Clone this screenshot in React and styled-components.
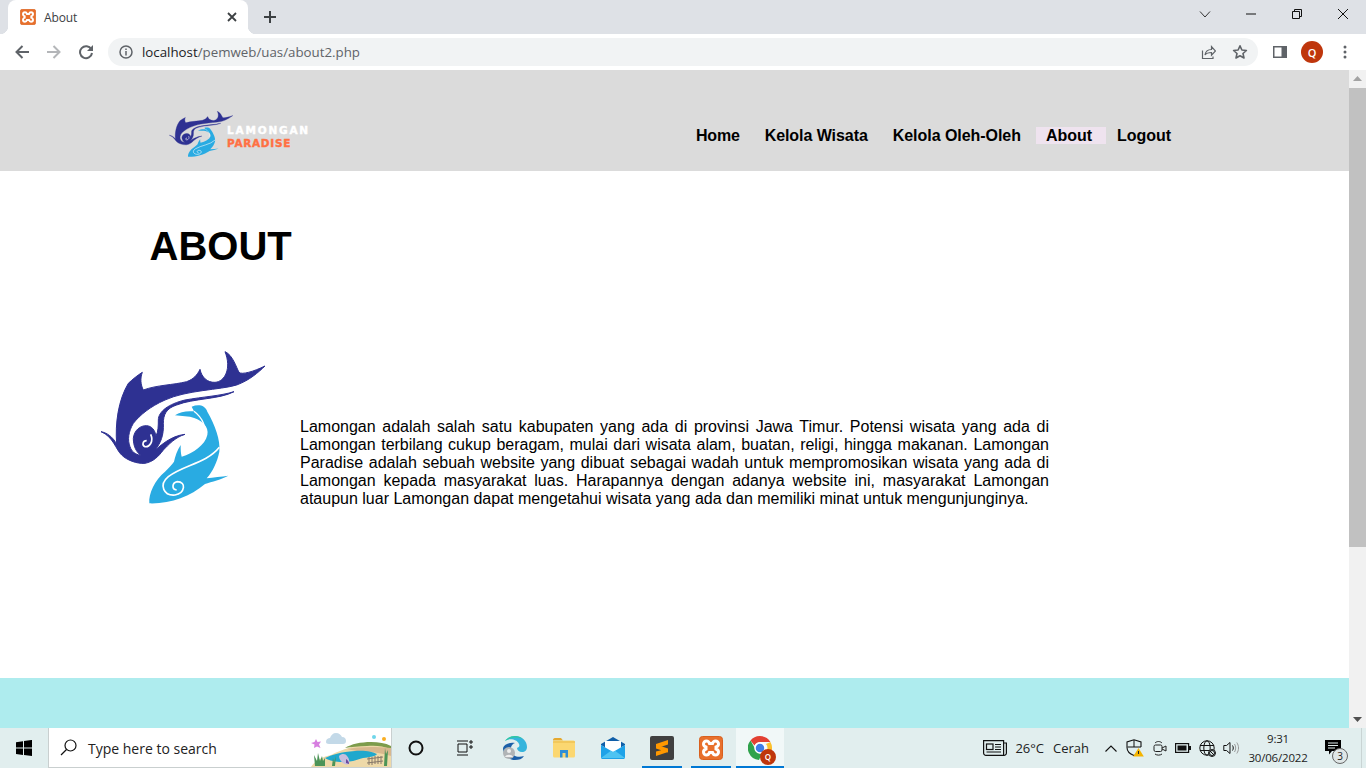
import React from "react";
import styled, { createGlobalStyle } from "styled-components";

const Global = createGlobalStyle`
  html, body { margin: 0; padding: 0; height: 768px; overflow: hidden; background: #fff; }
  #root { height: 768px; }
  * { box-sizing: border-box; }
`;

const Screen = styled.div`
  width: 1366px; height: 768px; display: flex; flex-direction: column; overflow: hidden;
`;

/* ---------- browser chrome ---------- */
const TabStrip = styled.div`
  height: 34px; background: #dee1e6; display: flex; align-items: stretch; padding-left: 8px; flex: none;
`;
const Tab = styled.div`
  width: 240px; background: #fff; border-radius: 8px 8px 0 0; display: flex; align-items: center;
  padding: 0 11px 0 12px; position: relative;
  &::before, &::after { content: ""; position: absolute; bottom: 0; width: 8px; height: 8px; background: #fff; }
  &::before { left: -8px; -webkit-mask: radial-gradient(circle at 0 0, transparent 8px, #000 8.5px); mask: radial-gradient(circle at 0 0, transparent 8px, #000 8.5px); }
  &::after { right: -8px; -webkit-mask: radial-gradient(circle at 100% 0, transparent 8px, #000 8.5px); mask: radial-gradient(circle at 100% 0, transparent 8px, #000 8.5px); }
`;
const TabTitle = styled.span`
  font: 12px "Open Sans", sans-serif; color: #3c4043; margin-left: 8px; flex: 1; letter-spacing: -.1px;
`;
const NewTab = styled.div`
  width: 28px; margin-left: 8px; display: flex; align-items: center; justify-content: center;
`;
const StripSpace = styled.div` flex: 1; `;
const WinBtn = styled.div`
  width: 46px; display: flex; align-items: center; justify-content: center; padding-bottom: 6px;
`;
const Toolbar = styled.div`
  height: 36px; background: #fff; display: flex; align-items: center; flex: none; padding-left: 6px;
`;
const NavBtn = styled.div`
  width: 32px; height: 32px; display: flex; align-items: center; justify-content: center;
  margin-left: ${p => p.$gap ?? 0}px;
`;
const Omnibox = styled.div`
  width: 1150px; height: 28px; margin-left: 6px; border-radius: 14px; background: #f1f3f4;
  display: flex; align-items: center; padding: 0 2px 0 10px;
`;
const Url = styled.div`
  font: 13.3px "Open Sans", sans-serif; color: #5f6368; flex: 1; margin-left: 8px;
  b { font-weight: 400; color: #202124; }
`;
const OmniBtn = styled.div`
  width: 32px; display: flex; align-items: center; justify-content: center;
`;
const Avatar = styled.div`
  width: 22px; height: 22px; border-radius: 50%; background: #bf360c; color: #fff;
  font: 600 11px "Open Sans", sans-serif; display: flex; align-items: center; justify-content: center;
  margin: 0 5px;
`;

/* ---------- page ---------- */
const PageArea = styled.div`
  height: 658px; flex: none; display: flex;
`;
const Viewport = styled.div`
  flex: 1; display: flex; flex-direction: column; background: #fff; overflow: hidden;
  font-family: "Liberation Sans", Arial, sans-serif; color: #000;
`;
const Header = styled.header`
  height: 101px; background: #dbdbdb; display: flex; justify-content: space-between; flex: none;
  padding: 40px 168px 0 169px;
`;
const Brand = styled.div`
  display: flex; align-items: flex-start;
`;
const BrandText = styled.div`
  margin: 14px 0 0 -6px; font-family: "DejaVu Sans", sans-serif; font-weight: 700; line-height: 13px;
`;
const BrandLine = styled.div`
  color: ${p => p.$color}; font-size: 10.5px; letter-spacing: ${p => p.$spacing};
  -webkit-text-stroke: .4px ${p => p.$color};
`;
const Nav = styled.nav`
  display: flex; gap: 5px; height: 17px; margin-top: 17px;
`;
const NavLink = styled.a`
  font: 700 16px/17px "Liberation Sans", Arial, sans-serif; color: #000; height: 17px;
  letter-spacing: ${p => p.$track ?? 0}px;
  padding: 0 ${p => p.$right ?? 10}px 0 ${p => p.$left ?? 10}px;
  background: ${p => (p.$active ? "#efe3ef" : "transparent")};
`;
const Title = styled.h1`
  font: 700 40px/46px "Liberation Sans", Arial, sans-serif; margin: 52px 0 0 149.5px;
`;
const AboutRow = styled.section`
  display: flex; align-items: flex-start; margin-top: 71px; padding-left: 90px;
`;
const AboutText = styled.p`
  width: 749px; margin: 78px 0 0 20px; font-size: 16px; line-height: 18px; text-align: justify;
`;
const Footer = styled.footer`
  margin-top: auto; height: 50px; background: #aeecee; flex: none;
`;
const Scrollbar = styled.div`
  width: 17px; background: #f1f1f1; display: flex; flex-direction: column; flex: none;
`;
const ScrollArrow = styled.div`
  height: 17px; display: flex; align-items: center; justify-content: center; flex: none;
`;
const Thumb = styled.div`
  height: 459px; background: #c1c1c1; margin-top: 1px; flex: none;
`;
const ScrollGap = styled.div` flex: 1; `;

/* ---------- taskbar ---------- */
const Taskbar = styled.div`
  height: 40px; flex: none; background: #e1eeee; display: flex; align-items: stretch;
  font-family: "Open Sans", sans-serif; color: #1a1a1a;
`;
const StartBtn = styled.div`
  width: 48px; display: flex; align-items: center; justify-content: center;
`;
const SearchBox = styled.div`
  width: 344px; background: #fff; border: 1px solid #c9cfcf; border-width: 0 1px 1px 1px;
  display: flex; align-items: center; padding-left: 11px; position: relative; overflow: hidden;
`;
const SearchText = styled.span`
  font-size: 14px; margin: 2px 0 0 11px; color: #222;
`;
const Illustration = styled.svg`
  position: absolute; right: 0; top: 0;
`;
const TaskBtn = styled.div`
  width: 48px; display: flex; align-items: center; justify-content: center; position: relative;
  background: ${p => (p.$active ? "#f1f8f8" : "transparent")};
  ${p => p.$open && `
    &::after {
      content: ""; position: absolute; bottom: 0; height: 2px; background: #0078d4;
      left: ${p.$active ? 0 : 4}px; right: ${p.$active ? 0 : 4}px;
    }
  `}
`;
const TaskGroup = styled.div`
  display: flex; gap: 1px; margin-left: 3px;
`;
const Tray = styled.div`
  margin-left: auto; display: flex; align-items: center; padding-right: 11px; position: relative;
  &::after { content: ""; position: absolute; right: 4px; top: 0; bottom: 0; width: 1px; background: #c9d4d4; }
`;
const Weather = styled.div`
  display: flex; align-items: center; font-size: 13px; color: #222; margin-right: 12px;
`;
const WeatherText = styled.span`
  margin-left: ${p => p.$gap}px;
`;
const TrayIcon = styled.div`
  width: ${p => p.$w ?? 24}px; display: flex; align-items: center; justify-content: center;
`;
const Clock = styled.div`
  width: 66px; margin-left: 2px; display: flex; flex-direction: column; align-items: center;
  font-size: 11.5px; line-height: 19px; color: #222; letter-spacing: -.2px;
`;
const Notify = styled.div`
  width: 44px; height: 40px; display: flex; align-items: center; justify-content: center; position: relative;
`;
const Badge = styled.div`
  position: absolute; left: 21px; top: 20px; width: 16px; height: 16px; border-radius: 50%;
  background: #dfe6e6; border: 1px solid #666; font-size: 10px; line-height: 14px; text-align: center; color: #222;
`;
const ChromeWrap = styled.div`
  position: relative; width: 24px; height: 24px;
`;
const ChromeBadge = styled.span`
  position: absolute; right: -4px; bottom: -5px; width: 16px; height: 16px; border-radius: 50%;
  background: #bf360c; color: #fff; font: 600 8px/16px "Open Sans", sans-serif; text-align: center;
`;
const SmallLogoSvg = styled.svg`
  margin-top: 1px; flex: none;
`;

/* ---------- drawings ---------- */
const DARK = "M33 275 C50 278 68 290 80 312 C75 250 85 180 115 130 C128 118 142 106 157 97 C150 115 152 135 160 150 C200 135 250 135 290 125 C310 118 322 105 330 88 C335 112 352 128 375 127 C405 125 425 85 405 35 C428 45 438 80 447 97 C455 105 490 95 525 78 C505 97 480 120 440 135 C390 150 290 150 225 180 C180 200 150 225 130 250 C115 275 112 300 120 320 C125 335 135 343 152 346 C138 335 130 318 130 295 C132 272 150 256 170 257 C185 258 195 270 198 288 C205 275 205 255 205 240 C205 215 235 192 285 180 C340 170 390 168 432 155 C390 178 310 175 260 195 C228 205 220 225 220 250 C222 285 212 310 195 330 C212 318 240 288 285 283 C255 292 235 315 220 330 C205 350 190 365 165 370 C140 372 110 360 95 345 C78 330 70 290 33 275 Z";
const FISH = "M305 200 C325 192 345 195 352 215 C375 255 392 300 388 335 C382 365 368 395 350 415 C370 412 395 410 415 407 C395 418 365 425 345 432 C300 470 240 492 178 490 C175 460 195 420 225 395 C235 385 245 375 252 365 C255 350 262 330 272 315 C272 328 272 340 275 350 C310 340 345 315 352 285 C358 260 335 238 300 230 C285 228 270 228 255 226 C270 215 290 212 312 214 C310 210 308 205 305 200 Z";
const LogoShape = () => (
  <>
    <path d={DARK} fill="#2e3192" stroke="#2e3192" strokeWidth="3" strokeLinejoin="round" />
    <path d="M182 283 C192 305 178 322 165 320 C155 316 158 302 170 302" stroke="#fff" strokeWidth="5" fill="none" />
    <path d={FISH} fill="#29abe2" />
    <path d="M312 214 C340 235 350 265 342 290" stroke="#fff" strokeWidth="4" fill="none" />
    <path d="M388 322 C350 370 280 375 235 410 C205 435 222 468 255 465 C285 460 290 425 262 425 C245 428 245 448 260 450" stroke="#fff" strokeWidth="5" fill="none" />
  </>
);
const BigLogo = () => (
  <svg width="190" height="175" viewBox="0 0 570 525"><LogoShape /></svg>
);
const SmallLogo = () => (
  <SmallLogoSvg width="64" height="46" viewBox="30 32 497 460" preserveAspectRatio="none"><LogoShape /></SmallLogoSvg>
);
const Xampp = ({ s = 16 }) => (
  <svg width={s} height={s} viewBox="0 0 24 24">
    <rect x="0.5" y="0.5" width="23" height="23" rx="3" fill="#e8702c" stroke="#d9601e" />
    <path d="M7.500 5a3 3 0 0 0-3 3c0 1.500 1 2.500 2.500 3v2c-1.500.500-2.500 1.500-2.500 3a3 3 0 0 0 3 3c1.500 0 2.500-1 3-2.500h3c.500 1.500 1.500 2.500 3 2.500a3 3 0 0 0 3-3c0-1.500-1-2.500-2.500-3v-2c1.500-.500 2.500-1.500 2.500-3a3 3 0 0 0-3-3c-1.500 0-2.500 1-3 2.500h-3c-.500-1.500-1.500-2.500-3-2.500Z" fill="none" stroke="#fff" strokeWidth="3" />
  </svg>
);
const Line = ({ d, w = 16, h = 16, c = "#5f6368", sw = 2 }) => (
  <svg width={w} height={h} viewBox={`0 0 ${w} ${h}`} fill="none" stroke={c} strokeWidth={sw}><path d={d} /></svg>
);
const ArrowIcon = ({ dir, c }) => (
  <Line c={c} d={dir === "left" ? "M15 8H2.500M8.500 2 2.500 8l6 6" : "M1 8h12.500M7.500 2l6 6-6 6"} />
);
const Reload = () => (
  <svg width="16" height="16" viewBox="0 0 16 16" fill="none">
    <path d="M13.300 5.300A6 6 0 1 0 14 9" stroke="#5f6368" strokeWidth="2" />
    <path d="M15 1v6H9z" fill="#5f6368" />
  </svg>
);
const InfoIcon = () => (
  <svg width="16" height="16" viewBox="0 0 16 16" fill="none">
    <circle cx="8" cy="8" r="6" stroke="#5f6368" strokeWidth="1.500" />
    <path d="M8 7v4.500M8 4.500v1.500" stroke="#5f6368" strokeWidth="1.500" />
  </svg>
);
const Share = () => (
  <Line sw={1.200} d="M2.500 6.500v8h10.500v-2M5 11c.500-3.500 3-5.500 6.500-5.500V2.500l4 4.500-4 4.200V8.500C9 8.500 6.500 9 5 11Z" />
);
const Star = () => (
  <svg width="16" height="16" viewBox="0 0 16 16" fill="none">
    <path d="m8 1.800 1.900 4.200 4.500.5-3.400 3 1 4.500L8 11.700 4 14l1-4.500-3.400-3 4.500-.5z" stroke="#5f6368" strokeWidth="1.600" strokeLinejoin="round" />
  </svg>
);
const SidePanel = () => (
  <svg width="14" height="12" viewBox="0 0 14 12">
    <rect width="14" height="12" fill="#5f6368" />
    <rect x="1.500" y="1.500" width="7" height="9" fill="#fff" />
  </svg>
);
const Dots = () => (
  <svg width="4" height="14" viewBox="0 0 4 14" fill="#5f6368">
    <circle cx="2" cy="2" r="1.500" /><circle cx="2" cy="7" r="1.500" /><circle cx="2" cy="12" r="1.500" />
  </svg>
);
const Triangle = ({ up }) => (
  <svg width="9" height="5" viewBox="0 0 9 5" fill={up ? "#a3a3a3" : "#505050"}>
    <path d={up ? "M4.500 0 9 5H0z" : "M0 0h9L4.500 5z"} />
  </svg>
);
const WinLogo = () => (
  <svg width="16" height="16" viewBox="0 0 16 16" fill="#000">
    <path d="M0 2.200 7 1.200v6.400H0zM8 1l8-1.100v7.700H8zM0 8.500h7v6.400l-7-1zM8 8.500h8V16l-8-1.100z" />
  </svg>
);
const Magnifier = () => (
  <svg width="17" height="17" viewBox="0 0 17 17" fill="none" stroke="#111" strokeWidth="1.200">
    <circle cx="10.500" cy="6.500" r="5.500" /><path d="M6.500 10.500 1 16" />
  </svg>
);
const Landscape = () => (
  <Illustration width="80" height="39" viewBox="0 0 80 39">
    <path d="M5 11 6.500 14l3.500-.5-2 3 1.500 3.500-3.500-1.500L3 20l.5-3.500L0 15l3.500-1z" fill="#d77fe0" />
    <path d="M15 14c0-3 2-4 4-4 1-3 3-5 6-5 3 0 5 2 6 4 3 0 4 2 4 4 0 2-1 3-3 3H18c-2 0-3-1-3-2z" fill="#c3d9e8" />
    <circle cx="63" cy="9" r="2" fill="#6fd6ea" /><circle cx="73" cy="11" r="2" fill="#f9ae23" />
    <path d="M0 39c4-6 10-10 20-12 12-6 24-10 38-11 8 0 16 1 22 3v20z" fill="#eed9a8" />
    <path d="M34 20c6-4 16-6 26-6 8 0 14 1 20 4v3c-8-3-16-4-24-3-8 0-16 1-22 2z" fill="#7d9c4c" />
    <path d="M36 21c10-2 24-3 44-1v8c-10-3-22-5-30-4z" fill="#d8b88e" />
    <path d="M14 30c6-3 16-6 30-7 10-1 18 1 22 3-2 3-8 3-14 4-4 1-6 2-10 3-10 2-22 1-28-3z" fill="#1fa8cd" />
    <path d="M28 28c3-3 7-2 8 0 2 2 3 6 2 8-3 1-6 0-8-3-1-1-2-3-2-5z" fill="#c7bedd" />
    <path d="M35 31c2 1 3 3 3 5l-3-1z" fill="#6a4aa0" />
    <path d="M4 38 3 27l3 6 1-8 2 8 2-5 1 5 2-3 0 8zM21 38l1-8 1 4 2-6-1 10zM73 38l1-18 1 6 2-4-1 16z" fill="#4c9457" />
    <path d="M56 31l16-2M56 35l16-2M58 29v8M61 29v8M64 28v8M67 28v8M70 28v8" stroke="#86796a" strokeWidth="1" />
  </Illustration>
);
const Edge = () => (
  <svg width="26" height="26" viewBox="0 0 26 26">
    <path d="M25 12c0-6-5-11-12-11C9 1 5 3 3 6c4-3 12-2 14 3 1 2 0 3-2 4 0 2 2 4 5 4 3 0 5-2 5-5z" fill="#35b4dc" />
    <path d="M3 6C5 3 9 1 13 1c3 0 6 1 8 3-4-2-10-2-14 0z" fill="#2fc8a0" />
    <path d="M1 13c0 7 6 12 12 12 4 0 7-1 9-4-6 2-12 0-13-5-1-4 1-7 4-8-5-1-11 1-12 5z" fill="#1b5fa8" />
    <circle cx="7" cy="18" r="6" fill="#b0b4b6" /><circle cx="7" cy="16" r="2" fill="#eee" /><path d="M3 22c1-3 7-3 8 0z" fill="#eee" />
  </svg>
);
const Explorer = () => (
  <svg width="22" height="20" viewBox="0 0 22 20">
    <path d="M0 2c0-1 .500-2 2-2h6l2 2.500H0z" fill="#e5a82e" />
    <rect y="2.500" width="22" height="17" rx="1.500" fill="#fbd771" />
    <path d="M0 4h22" stroke="#e9b948" />
    <path d="M7 19.500V12h8v7.500h-2.500V15h-3v4.500z" fill="#2f8fd6" />
  </svg>
);
const Mail = () => (
  <svg width="24" height="22" viewBox="0 0 24 22">
    <path d="M0 7 12 0l12 7v1L12 15 0 8z" fill="#0f5ea8" />
    <path d="M4 4h16v8l-8 5-8-5z" fill="#fff" />
    <path d="M0 8v12.500c0 .800.700 1.500 1.500 1.500h21c.800 0 1.500-.700 1.500-1.500V8l-12 7z" fill="#1ea2e8" />
    <path d="M0 21 10 13.800 12 15l2-1.200L24 21z" fill="#4dc3f2" />
  </svg>
);
const Sublime = () => (
  <svg width="24" height="24" viewBox="0 0 24 24">
    <rect width="24" height="24" rx="2" fill="#404040" />
    <path d="M18 4v4.500L6 12.500V8zM6 8.500l12 4v4l-12-4zM18 12.500V16L6 20v-4.500z" fill="#ff9800" />
  </svg>
);
const ChromeQ = () => (
  <ChromeWrap>
    <svg width="24" height="24" viewBox="0 0 24 24">
      <path d="M12 0a12 12 0 0 1 10.400 6H12a6 6 0 0 0-5.500 3.500L2.500 4.500A12 12 0 0 1 12 0z" fill="#e34133" />
      <path d="M22.400 6A12 12 0 0 1 13 24l4.500-7.500A6 6 0 0 0 18 8z" fill="#fbc02d" />
      <path d="M2.500 4.500l4.500 8A6 6 0 0 0 14 17.500l-3 6.500A12 12 0 0 1 2.500 4.500z" fill="#2fa24c" />
      <circle cx="12" cy="12" r="5" fill="#3f7de8" stroke="#fff" strokeWidth="1.500" />
    </svg>
    <ChromeBadge>Q</ChromeBadge>
  </ChromeWrap>
);
const News = () => (
  <svg width="24" height="16" viewBox="0 0 24 16" fill="none" stroke="#111" strokeWidth="1.200">
    <path d="M.6.6h20v14.800H3A2.400 2.400 0 0 1 .6 13zM20.600 3h2.800v10a2.400 2.400 0 0 1-2.400 2.400" />
    <rect x="3.500" y="4" width="6.500" height="5.500" /><path d="M12 4.500h6M12 7h6M12 9.500h6M3.500 12h14.500" />
  </svg>
);
const Shield = () => (
  <svg width="18" height="18" viewBox="0 0 18 18" fill="none">
    <path d="M8 .8 1 3v5.500c0 3.500 3 6.500 7 8 1 0 1.500-.500 2-1M8 .8 15 3v5" stroke="#111" strokeWidth="1.100" />
    <path d="M8 1v7H1.500M8 8h7" stroke="#111" strokeWidth="1" />
    <path d="M12.500 9 17.800 17.500H7.200z" fill="#f4b400" />
    <path d="M12.500 12v3" stroke="#222" />
  </svg>
);
const Meet = () => (
  <svg width="14" height="16" viewBox="0 0 14 16" fill="none" stroke="#222" strokeWidth="1">
    <rect x="1" y="5" width="8" height="6.500" rx="1.500" /><path d="m9 8 4-2v5l-4-2M2 3c2-2 5-2 7 0M2 14c2 1.500 5 1.500 7 0" />
  </svg>
);
const Battery = () => (
  <svg width="16" height="10" viewBox="0 0 16 10">
    <rect x=".6" y=".6" width="13" height="8.800" fill="none" stroke="#111" strokeWidth="1.200" />
    <rect x="2.500" y="2.500" width="9" height="5" fill="#111" /><rect x="14" y="3" width="2" height="4" fill="#111" />
  </svg>
);
const Globe = () => (
  <svg width="17" height="17" viewBox="0 0 17 17" fill="none" stroke="#111" strokeWidth="1">
    <circle cx="8" cy="8" r="7.200" /><ellipse cx="8" cy="8" rx="3.200" ry="7.200" /><path d="M1 5.500h14M1 10.500h14" />
    <circle cx="13" cy="13" r="3.500" fill="#e1eeee" /><path d="m11 11 4 4" /><circle cx="13" cy="13" r="2.500" />
  </svg>
);
const Volume = () => (
  <svg width="17" height="14" viewBox="0 0 17 14" fill="none" stroke="#111" strokeWidth="1">
    <path d="M.8 4.500h2.700L7 1.500v11l-3.500-3H.8z" />
    <path d="M9.500 4.500c1 1.500 1 3.500 0 5" /><path d="M11.500 3c1.600 2.500 1.600 5.500 0 8M13.800 1.500c2.300 3.500 2.300 7.500 0 11" stroke="#999" />
  </svg>
);
const Chat = () => (
  <svg width="17" height="16" viewBox="0 0 17 16">
    <path d="M0 0h16v11H7l-3 3.500V11H0z" fill="#000" />
    <path d="M3 3h10M3 5.500h10M3 8h7" stroke="#e1eeee" />
  </svg>
);

export default function App() {
  return (
    <Screen>
      <Global />
      <TabStrip>
        <Tab>
          <Xampp />
          <TabTitle>About</TabTitle>
          <Line w={10} h={10} c="#3c4043" sw={1.800} d="M1 1l8 8M9 1 1 9" />
        </Tab>
        <NewTab><Line w={12} h={12} c="#3c4043" sw={2} d="M6 0v12M0 6h12" /></NewTab>
        <StripSpace />
        <WinBtn><Line w={12} h={7} c="#333" sw={1} d="M1 .5l5 5.500 5-5.500" /></WinBtn>
        <WinBtn><Line w={10} h={2} c="#111" sw={1} d="M0 1h10" /></WinBtn>
        <WinBtn><Line w={10} h={10} c="#111" sw={1} d="M.5 2.500h7v7h-7zM2.500 2.500v-2h7v7h-2" /></WinBtn>
        <WinBtn><Line w={12} h={12} c="#111" sw={1} d="M1 1l10 10M11 1 1 11" /></WinBtn>
      </TabStrip>
      <Toolbar>
        <NavBtn><ArrowIcon dir="left" c="#5f6368" /></NavBtn>
        <NavBtn><ArrowIcon dir="right" c="#b4b6b9" /></NavBtn>
        <NavBtn><Reload /></NavBtn>
        <Omnibox>
          <InfoIcon />
          <Url><b>localhost</b>/pemweb/uas/about2.php</Url>
          <OmniBtn><Share /></OmniBtn>
          <OmniBtn><Star /></OmniBtn>
        </Omnibox>
        <NavBtn $gap={6}><SidePanel /></NavBtn>
        <Avatar>Q</Avatar>
        <NavBtn $gap={1}><Dots /></NavBtn>
      </Toolbar>
      <PageArea>
        <Viewport>
          <Header>
            <Brand>
              <SmallLogo />
              <BrandText>
                <BrandLine $color="#ffffff" $spacing="1.800px">LAMONGAN</BrandLine>
                <BrandLine $color="#ff7043" $spacing="0.700px">PARADISE</BrandLine>
              </BrandText>
            </Brand>
            <Nav>
              <NavLink $track={-0.2}>Home</NavLink>
              <NavLink $track={-0.06}>Kelola Wisata</NavLink>
              <NavLink $track={-0.05}>Kelola Oleh-Oleh</NavLink>
              <NavLink $active $right={14}>About</NavLink>
              <NavLink $left={6} $track={-0.05}>Logout</NavLink>
            </Nav>
          </Header>
          <Title>ABOUT</Title>
          <AboutRow>
            <BigLogo />
            <AboutText>
              Lamongan adalah salah satu kabupaten yang ada di provinsi Jawa Timur. Potensi wisata yang ada di Lamongan terbilang cukup beragam, mulai dari wisata alam, buatan, religi, hingga makanan. Lamongan Paradise adalah sebuah website yang dibuat sebagai wadah untuk mempromosikan wisata yang ada di Lamongan kepada masyarakat luas. Harapannya dengan adanya website ini, masyarakat Lamongan ataupun luar Lamongan dapat mengetahui wisata yang ada dan memiliki minat untuk mengunjunginya.
            </AboutText>
          </AboutRow>
          <Footer />
        </Viewport>
        <Scrollbar>
          <ScrollArrow><Triangle up /></ScrollArrow>
          <Thumb />
          <ScrollGap />
          <ScrollArrow><Triangle /></ScrollArrow>
        </Scrollbar>
      </PageArea>
      <Taskbar>
        <StartBtn><WinLogo /></StartBtn>
        <SearchBox>
          <Magnifier />
          <SearchText>Type here to search</SearchText>
          <Landscape />
        </SearchBox>
        <TaskBtn>
          <svg width="16" height="16" viewBox="0 0 16 16" fill="none"><circle cx="8" cy="8" r="6.500" stroke="#111" strokeWidth="2" /></svg>
        </TaskBtn>
        <TaskBtn>
          <Line w={17} h={16} c="#111" sw={1} d="M1 1h11M1 15h11M2 4h9v8H2zM14 1h2v2h-2zM14 6h2v2h-2z" />
        </TaskBtn>
        <TaskGroup>
          <TaskBtn><Edge /></TaskBtn>
          <TaskBtn><Explorer /></TaskBtn>
          <TaskBtn><Mail /></TaskBtn>
          <TaskBtn $open><Sublime /></TaskBtn>
          <TaskBtn $open><Xampp s={24} /></TaskBtn>
          <TaskBtn $open $active><ChromeQ /></TaskBtn>
        </TaskGroup>
        <Tray>
          <Weather>
            <News />
            <WeatherText $gap={8}>26°C</WeatherText>
            <WeatherText $gap={9}>Cerah</WeatherText>
          </Weather>
          <TrayIcon $w={20}><Line w={12} h={7} c="#111" sw={1.100} d="M.5 6.500 6 1l5.500 5.500" /></TrayIcon>
          <TrayIcon $w={28}><Shield /></TrayIcon>
          <TrayIcon $w={22}><Meet /></TrayIcon>
          <TrayIcon><Battery /></TrayIcon>
          <TrayIcon><Globe /></TrayIcon>
          <TrayIcon><Volume /></TrayIcon>
          <Clock><span>9:31</span><span>30/06/2022</span></Clock>
          <Notify><Chat /><Badge>3</Badge></Notify>
        </Tray>
      </Taskbar>
    </Screen>
  );
}
